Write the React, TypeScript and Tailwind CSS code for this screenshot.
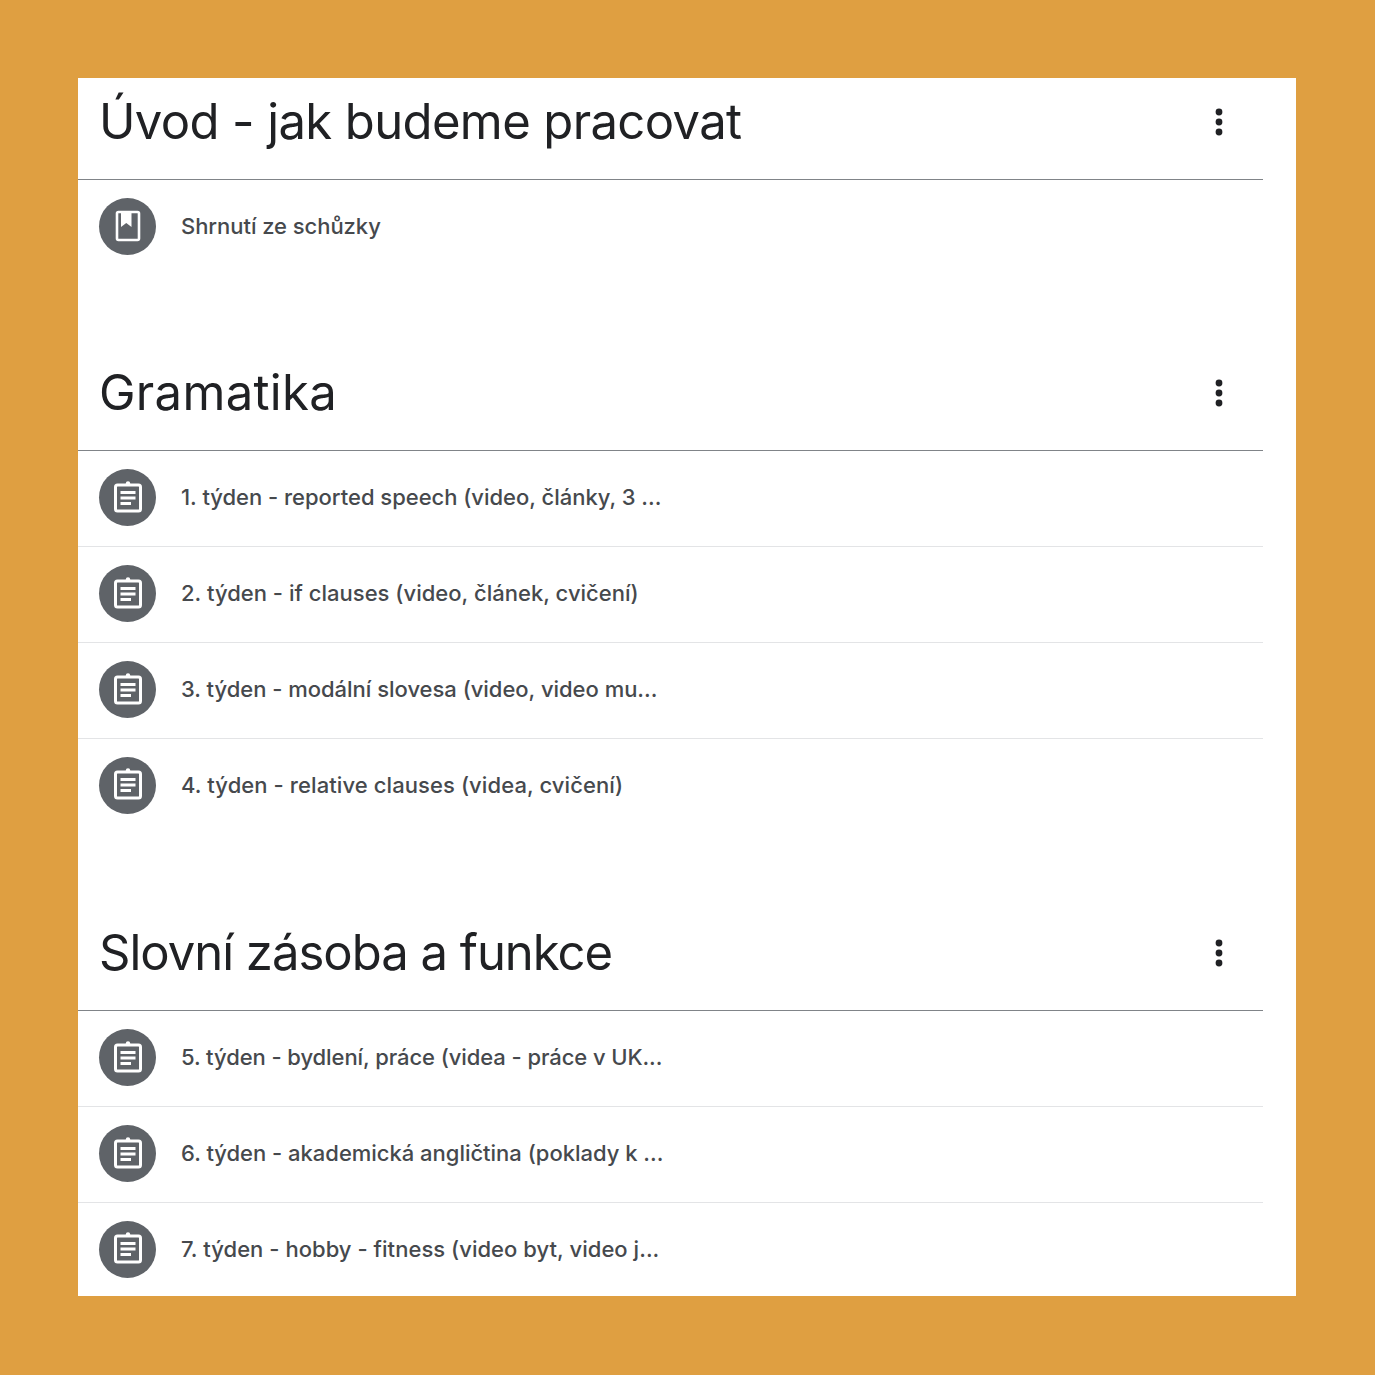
const sections = [
  {
    title: "Úvod - jak budeme pracovat",
    titleClass: "tracking-[-0.62px]",
    gapClass: "mb-[73px]",
    kind: "book",
    rows: [{ text: "Shrnutí ze schůzky", cls: "tracking-[-0.05px]" }],
  },
  {
    title: "Gramatika",
    titleClass: "tracking-[0.3px]",
    gapClass: "mb-[74px]",
    kind: "clip",
    rows: [
      { text: "1. týden - reported speech (video, články, 3 ...", cls: "tracking-[-0.02px]" },
      { text: "2. týden - if clauses (video, článek, cvičení)", cls: "tracking-[0.02px]" },
      { text: "3. týden - modální slovesa (video, video mu...", cls: "tracking-[-0.02px]" },
      { text: "4. týden - relative clauses (videa, cvičení)", cls: "tracking-[0.09px]" },
    ],
  },
  {
    title: "Slovní zásoba a funkce",
    titleClass: "tracking-[-1px]",
    gapClass: "mb-0",
    kind: "clip",
    rows: [
      { text: "5. týden - bydlení, práce (videa - práce v UK...", cls: "tracking-[-0.08px]" },
      { text: "6. týden - akademická angličtina (poklady k ...", cls: "tracking-[-0.02px]" },
      { text: "7. týden - hobby - fitness (video byt, video j...", cls: "tracking-[0.04px]" },
    ],
  },
];

function BookIcon() {
  return (
    <svg width="30" height="34" viewBox="0 0 30 34" fill="none">
      <rect x="4" y="3" width="22" height="28" rx="1.5" stroke="white" strokeWidth="2.6" />
      <path d="M8 3h10.5v15l-5.25-4L8 18z" fill="white" />
    </svg>
  );
}

function ClipIcon() {
  return (
    <svg width="32" height="34" viewBox="0 1 32 34" fill="none">
      <rect x="3.5" y="5" width="25" height="26" rx="2" stroke="white" strokeWidth="3" />
      <circle cx="16" cy="3.4" r="2.2" fill="white" />
      <path d="M8.5 12.5h15M8.5 18h15M8.5 23.5h10.5" stroke="white" strokeWidth="3" />
    </svg>
  );
}

function Dots() {
  return (
    <svg width="8" height="28" viewBox="0 0 8 28" className="shrink-0 mt-[1px]">
      <circle cx="4" cy="4" r="3.4" fill="#202124" />
      <circle cx="4" cy="14" r="3.4" fill="#202124" />
      <circle cx="4" cy="24" r="3.4" fill="#202124" />
    </svg>
  );
}

export default function App() {
  return (
    <div className="w-[1375px] h-[1375px] bg-[#df9f41] p-[78px] font-['Inter',sans-serif]">
      <div className="w-[1218px] h-[1218px] bg-white overflow-hidden pr-[33px]">
        {sections.map((section) => (
          <section key={section.title} className={section.gapClass}>
            <div className="h-[102px] flex items-center justify-between border-b border-[#808488] pl-[21px] pr-[40px] pb-[14px]">
              <h2 className={"text-[49px] leading-none text-[#202124] whitespace-nowrap " + section.titleClass}>
                {section.title}
              </h2>
              <Dots />
            </div>
            {section.rows.map((row, i) => (
              <div
                key={row.text}
                className={
                  i < section.rows.length - 1
                    ? "h-[96px] flex items-center pl-[21px] pb-[2px] border-b border-[#e3e4e6]"
                    : "h-[96px] flex items-center pl-[21px] pb-[4px]"
                }
              >
                <div className="w-[57px] h-[57px] rounded-full bg-[#5f6368] flex items-center justify-center shrink-0">
                  {section.kind === "book" ? <BookIcon /> : <ClipIcon />}
                </div>
                <span className={"ml-[25px] text-[22px] font-medium text-[#46494d] whitespace-nowrap " + row.cls}>
                  {row.text}
                </span>
              </div>
            ))}
          </section>
        ))}
      </div>
    </div>
  );
}
